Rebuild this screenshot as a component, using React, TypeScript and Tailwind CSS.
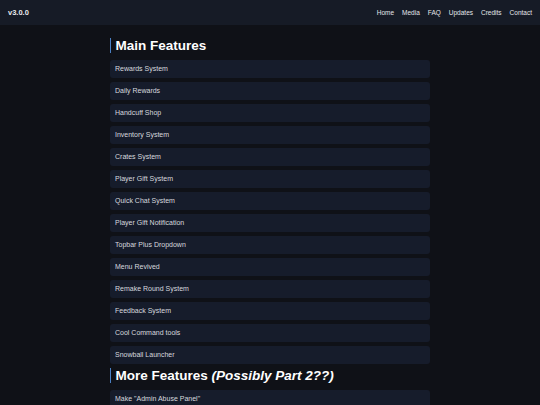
import React from 'react';

const mainFeatures = [
  'Rewards System',
  'Daily Rewards',
  'Handcuff Shop',
  'Inventory System',
  'Crates System',
  'Player Gift System',
  'Quick Chat System',
  'Player Gift Notification',
  'Topbar Plus Dropdown',
  'Menu Revived',
  'Remake Round System',
  'Feedback System',
  'Cool Command tools',
  'Snowball Launcher',
];

const moreFeatures = ['Make "Admin Abuse Panel"'];

const navLinks = ['Home', 'Media', 'FAQ', 'Updates', 'Credits', 'Contact'];

function Heading({ children }: { children: React.ReactNode }) {
  return (
    <h2 className="flex items-center h-[15px] mb-[7px] border-l-[1.5px] border-[#4a80c4] pl-[4.5px] text-[13.5px] font-bold leading-none text-white">
      {children}
    </h2>
  );
}

function FeatureCard({ name }: { name: string }) {
  return (
    <div className="flex items-center h-[17.5px] mb-[4.5px] rounded-[3px] bg-[#161c2b] px-[5px] text-[7px] text-[#d6d9df]">
      {name}
    </div>
  );
}

export default function App() {
  return (
    <div
      className="min-h-screen bg-[#0f1117] text-white"
      style={{ fontFamily: '"Liberation Sans", Arial, sans-serif' }}
    >
      {/* Top bar */}
      <header className="flex items-center justify-between h-[25px] px-[8px] bg-[#161b26]">
        <span className="text-[7.5px] font-bold text-[#e8eaee]">v3.0.0</span>
        <nav className="flex gap-[8px] text-[6.5px] text-[#e5e7eb]">
          {navLinks.map(link => (
            <a key={link} href="#">{link}</a>
          ))}
        </nav>
      </header>

      <main className="w-[320px] mx-auto pt-[13px]">
        <Heading>Main Features</Heading>
        {mainFeatures.map(f => (
          <FeatureCard key={f} name={f} />
        ))}

        <Heading>
          More Features&nbsp;<em className="italic">(Possibly Part 2??)</em>
        </Heading>
        {moreFeatures.map(f => (
          <FeatureCard key={f} name={f} />
        ))}
      </main>
    </div>
  );
}
